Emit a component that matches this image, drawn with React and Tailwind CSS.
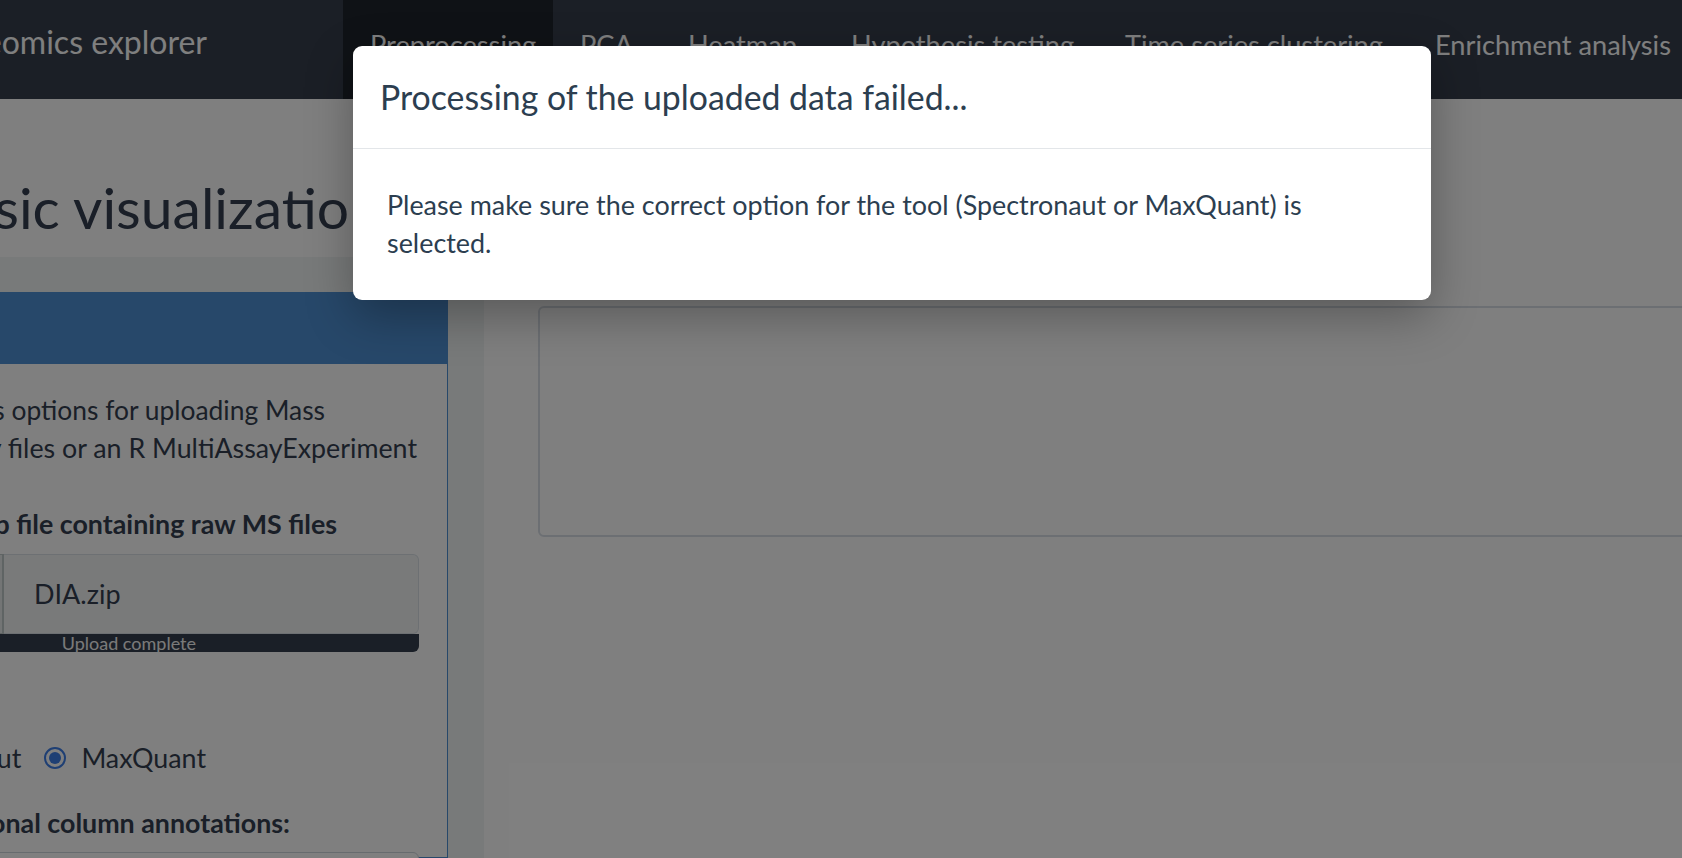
import React from "react";

const tabs = [
    { label: "Preprocessing", w: "w-[210px]", active: true },
    { label: "PCA", w: "w-[108px]" },
    { label: "Heatmap", w: "w-[163px]" },
    { label: "Hypothesis testing", w: "w-[274px]" },
    { label: "Time series clustering", w: "w-[310px]" },
    { label: "Enrichment analysis", w: "w-[274px]" },
];

const Radio = ({ checked }) => (
    <span className="flex h-[22px] w-[22px] shrink-0 items-center justify-center rounded-full border-2 border-[#3d7ee8] bg-white">
        {checked && <span className="h-[12px] w-[12px] rounded-full bg-[#3d7ee8]" />}
    </span>
);

const Navbar = () => (
    <nav className="flex h-[99px] bg-[#363e4c] text-white">
        <div className="flex w-[343px] shrink-0 justify-end pr-[136px]">
            <span className="whitespace-nowrap pt-[23px] text-[32px] leading-[1.2]">Proteomics explorer</span>
        </div>
        {tabs.map((t) => (
            <div
                key={t.label}
                className={
                    t.w +
                    " shrink-0 whitespace-nowrap pl-[27px] pt-[25px] text-[27.2px] leading-[1.5] " +
                    (t.active ? "bg-[#1e242c]" : "")
                }
            >
                {t.label}
            </div>
        ))}
    </nav>
);

const Sidebar = () => (
    <aside className="-ml-[240px] h-[601px] w-[724px] shrink-0 bg-[#f0f4f4] px-[36px] pt-[35px]">
        <div className="h-full border border-[#4e91d5] bg-white">
            <div className="h-[71px] bg-[#4e91d5]" />
            <div className="px-[28px] pt-[27px] text-[26.8px] leading-[38.4px]">
                <div className="mr-[94px] flex justify-end whitespace-nowrap text-[26.4px]">
                    This tab provides options for uploading Mass
                </div>
                <div className="mr-[2px] flex justify-end whitespace-nowrap">Spectrometry files or an R MultiAssayExperiment</div>

                <div className="mr-[82px] mt-[37px] flex justify-end whitespace-nowrap font-bold">
                    Upload a zip file containing raw MS files
                </div>
                <div className="mt-[11px] flex h-[80px]">
                    <div className="w-[179px] shrink-0 rounded-l-[6px] border border-r-2 border-[#bfc9c9] bg-[#e6ebeb]" />
                    <div className="flex flex-1 items-center rounded-r-[6px] border border-l-0 border-[#dae1e7] bg-[#f3f5f5] pl-[30px] text-[27px]">
                        DIA.zip
                    </div>
                </div>
                <div className="flex h-[18px] justify-end overflow-hidden rounded-b-[6px] bg-[#343e4e] pr-[223px]">
                    <span className="whitespace-nowrap text-[18px] leading-[18px] text-[#f4f4f4]">Upload complete</span>
                </div>

                <div className="mt-[48px] font-bold">Data source</div>
                <div className="mr-[213px] flex h-[38.4px] items-center justify-end whitespace-nowrap">
                    <Radio />
                    <span className="ml-[12px]">Spectronaut</span>
                    <span className="ml-[23px]">
                        <Radio checked />
                    </span>
                    <span className="ml-[15px]">MaxQuant</span>
                </div>

                <div className="mr-[129px] mt-[27px] flex justify-end whitespace-nowrap font-bold">
                    Additional column annotations:
                </div>
                <div className="mt-[10px] h-[60px] rounded-[6px] border border-[#ced6dc] bg-white" />
            </div>
        </div>
    </aside>
);

const ErrorModal = () => (
    <>
        <div className="absolute inset-0 bg-black/50" />
        <div className="absolute left-[353px] top-[46px] w-[1078px] rounded-[9px] bg-white text-[#2c3e50] shadow-[0_16px_48px_rgba(0,0,0,0.3)]">
            <div className="flex h-[103px] items-center border-b border-[#e3e6e9] pl-[27px]">
                <h4 className="text-[33.8px] leading-[1.2]">Processing of the uploaded data failed...</h4>
            </div>
            <div className="px-[34px] pb-[37px] pt-[37px] text-[26.9px] leading-[38.4px]">
                Please make sure the correct option for the tool (Spectronaut or MaxQuant) is selected.
            </div>
        </div>
    </>
);

export default function App() {
    return (
        <div className="relative h-[858px] w-[1682px] overflow-hidden bg-white font-['Lato',sans-serif] text-[#343e50]">
            <Navbar />
            <div className="flex h-[158px] w-[381px] justify-end pt-[74px]">
                <h1 className="whitespace-nowrap text-[57px] leading-[1.2]">Basic visualization</h1>
            </div>
            <div className="flex">
                <Sidebar />
                <main className="flex-1 pl-[54px] pt-[49px]">
                    <div className="-mr-[40px] h-[231px] rounded-[6px] border-2 border-[#d8dee6]" />
                </main>
            </div>
            <ErrorModal />
        </div>
    );
}
